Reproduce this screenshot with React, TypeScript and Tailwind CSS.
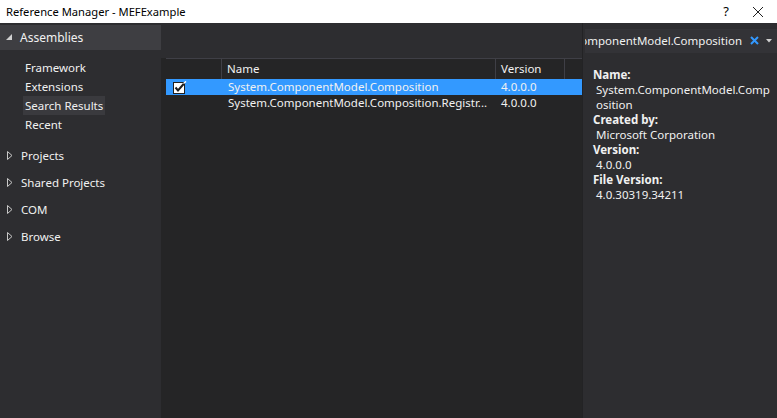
const font = { fontFamily: '"Noto Sans", "Open Sans", sans-serif' };

function Expanded() {
  return (
    <svg width="7" height="7" viewBox="0 0 7 7" className="shrink-0">
      <path d="M6 0 L6 6 L0 6 Z" fill="#d0d0d0" />
    </svg>
  );
}

function Collapsed() {
  return (
    <svg width="6" height="9" viewBox="0 0 6 9" className="shrink-0">
      <path d="M0.5 0.5 L5 4.5 L0.5 8.5 Z" fill="none" stroke="#c8c8c8" strokeWidth="1" />
    </svg>
  );
}

function CheckBox() {
  return (
    <svg width="14" height="13" viewBox="0 0 14 13" className="block">
      <rect x="0.5" y="1.5" width="11" height="11" fill="#ffffff" stroke="#202020" strokeWidth="1" />
      <path d="M2.5 6.5 L5 9.5 L11.5 2" fill="none" stroke="#1e1e1e" strokeWidth="2" />
      <path d="M10.5 2.5 L13 0.5" fill="none" stroke="#ffffff" strokeWidth="1.5" />
    </svg>
  );
}

const groups = ['Projects', 'Shared Projects', 'COM', 'Browse'];

const rows = [
  { name: 'System.ComponentModel.Composition', version: '4.0.0.0', selected: true },
  { name: 'System.ComponentModel.Composition.Registr...', version: '4.0.0.0', selected: false },
];

export default function App() {
  return (
    <div className="w-[777px] h-[418px] flex flex-col overflow-hidden text-[11.5px]" style={font}>
      <div className="h-[23px] shrink-0 bg-white flex items-center pl-[6px] text-black text-[11.2px]">
        <span className="flex-1 leading-none">Reference Manager - MEFExample</span>
        <span className="w-[40px] text-center text-[13px]">?</span>
        <svg width="12" height="12" viewBox="0 0 12 12" className="mr-[13px] ml-[6px]">
          <path d="M1 1 L11 11 M11 1 L1 11" stroke="#222" strokeWidth="1" />
        </svg>
      </div>

      <div className="flex-1 flex text-[#f1f1f1]">
        <div className="w-[161px] shrink-0 bg-[#2d2d30] flex flex-col">
          <div className="h-[25px] mt-[2px] bg-[#3e3e42] flex items-center gap-[7px] pl-[6px]">
            <Expanded />
            <span className="text-[12px]">Assemblies</span>
          </div>
          <div className="flex flex-col pl-[23px] pt-[8px]">
            <div className="h-[19px] flex items-center px-[2px]">Framework</div>
            <div className="h-[19px] flex items-center px-[2px]">Extensions</div>
            <div className="h-[19px] flex items-center px-[2px] bg-[#3a3a3e] self-start">Search Results</div>
            <div className="h-[19px] flex items-center px-[2px]">Recent</div>
          </div>
          <div className="flex flex-col pt-[8px]">
            {groups.map((g) => (
              <div key={g} className="h-[27px] flex items-center gap-[8px] pl-[7px]">
                <Collapsed />
                <span>{g}</span>
              </div>
            ))}
          </div>
        </div>

        <div className="w-[421px] shrink-0 flex flex-col bg-[#252526]">
          <div className="h-[35px] bg-[#2d2d30]" />
          <div className="pl-[5px]">
            <div className="flex h-[21px] border-t border-[#3f3f46] text-[#f1f1f1]">
              <div className="w-[56px] border-r border-[#3f3f46]" />
              <div className="w-[274px] border-r border-[#3f3f46] pl-[5px] flex items-center">Name</div>
              <div className="w-[69px] border-r border-[#3f3f46] pl-[5px] flex items-center">Version</div>
              <div className="flex-1" />
            </div>
            {rows.map((r) => (
              <div
                key={r.name}
                className={`flex h-[16px] items-center ${r.selected ? 'bg-[#3399ff]' : ''}`}
              >
                <div className="w-[56px] pl-[7px] flex items-center">{r.selected && <CheckBox />}</div>
                <div className="w-[274px] pl-[6px] whitespace-nowrap overflow-hidden">{r.name}</div>
                <div className="w-[69px] pl-[5px]">{r.version}</div>
              </div>
            ))}
          </div>
        </div>

        <div className="w-[195px] shrink-0 flex flex-col bg-[#2d2d30] border-l border-[#232325]">
          <div className="h-[35px] flex items-center pl-[2px]">
            <div className="h-[24px] w-[192px] bg-[#333337] flex items-center overflow-hidden">
              <div className="w-[157px] overflow-hidden flex justify-end whitespace-nowrap">
                <span className="shrink-0">System.ComponentModel.Composition</span>
              </div>
              <span className="w-[24px] flex justify-center">
                <svg width="9" height="9" viewBox="0 0 9 9">
                  <path d="M1 1 L8 8 M8 1 L1 8" stroke="#3399ff" strokeWidth="2" />
                </svg>
              </span>
              <svg width="6" height="4" viewBox="0 0 6 4">
                <path d="M0 0 L6 0 L3 3.5 Z" fill="#d0d0d0" />
              </svg>
            </div>
          </div>
          <div className="pl-[10px] pt-[9px] leading-[15px]">
            <div className="font-bold">Name:</div>
            <div className="pl-[3px]">System.ComponentModel.Comp</div>
            <div className="pl-[3px]">osition</div>
            <div className="font-bold">Created by:</div>
            <div className="pl-[3px]">Microsoft Corporation</div>
            <div className="font-bold">Version:</div>
            <div className="pl-[3px]">4.0.0.0</div>
            <div className="font-bold">File Version:</div>
            <div className="pl-[3px]">4.0.30319.34211</div>
          </div>
        </div>
      </div>
    </div>
  );
}
